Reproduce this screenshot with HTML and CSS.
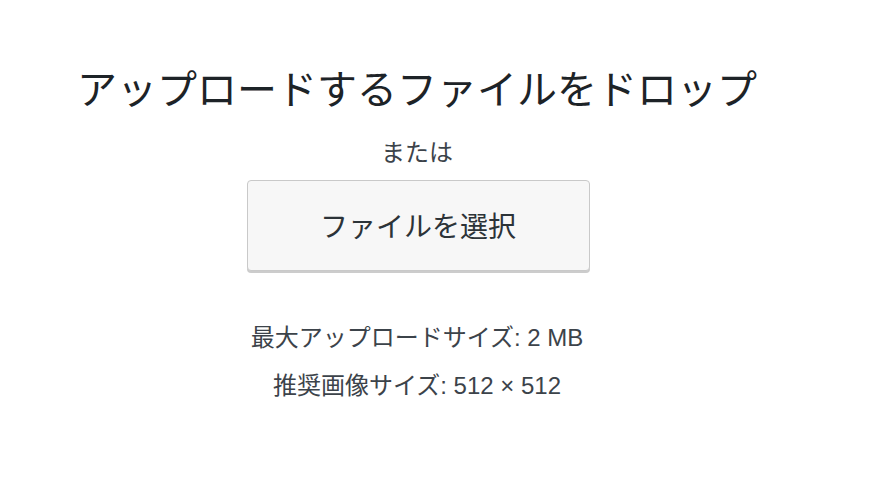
FILE: index.html
```html
<!DOCTYPE html>
<html lang="ja">
<head>
<meta charset="utf-8">
<title>アップロード</title>
<link rel="stylesheet" href="styles.css">
</head>
<body>
<div class="uploader">
  <h2 class="upload-title">アップロードするファイルをドロップ</h2>
  <p class="upload-or">または</p>
  <button class="browse-button" type="button">ファイルを選択</button>
  <div class="upload-info">
    <p class="info-line">最大アップロードサイズ: 2 MB</p>
    <p class="info-line">推奨画像サイズ: 512 × 512</p>
  </div>
</div>
</body>
</html>
```

FILE: styles.css
```css
html, body {
  margin: 0;
  padding: 0;
  background: #ffffff;
}

body {
  font-family: "Liberation Sans", "Noto Sans CJK JP", sans-serif;
  color: #3c434a;
}

.uploader {
  width: 834px;
  padding-top: 66px;
  display: flex;
  flex-direction: column;
  align-items: center;
  text-align: center;
}

.upload-title {
  margin: 0;
  font-size: 40px;
  line-height: 48px;
  font-weight: 400;
  color: #1d2327;
}

.upload-or {
  margin: 21px 0 0;
  font-size: 24px;
  line-height: 36px;
  color: #3c434a;
}

.browse-button {
  margin-top: 9px;
  width: 343px;
  height: 91px;
  box-sizing: border-box;
  border: 1px solid #c9c9c9;
  border-radius: 4px;
  background: #f7f7f7;
  box-shadow: 0 2px 0 #cccccc;
  font-family: inherit;
  font-size: 28px;
  color: #2c3338;
  padding: 0 0 1px;
  position: relative;
  left: 1px;
}

.upload-info {
  margin-top: 43px;
  display: flex;
  flex-direction: column;
}

.info-line {
  margin: 0;
  font-size: 24px;
  line-height: 48px;
  color: #3c434a;
}
```
